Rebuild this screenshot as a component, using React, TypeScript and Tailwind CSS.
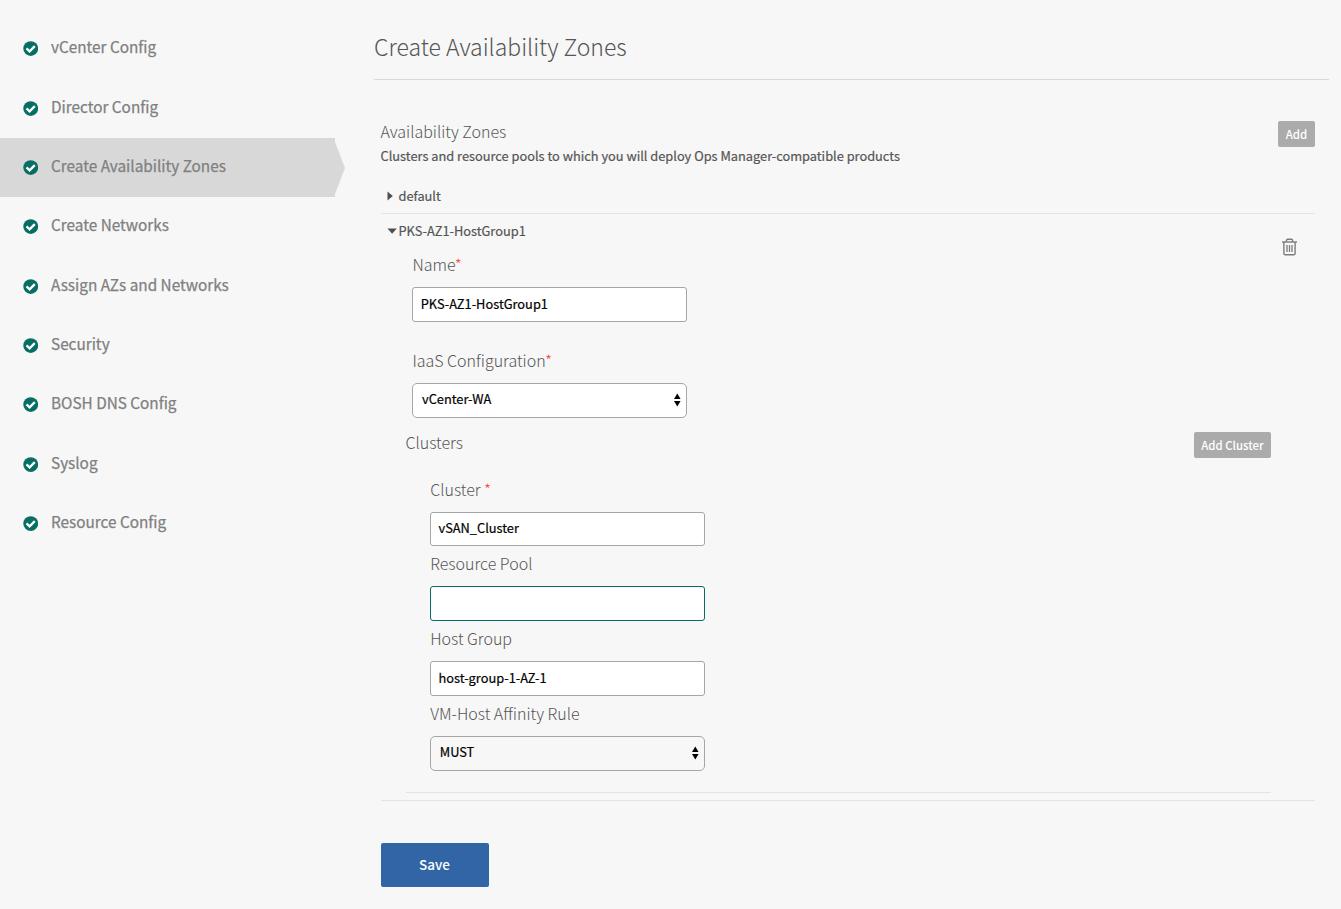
import type { ReactNode } from "react";

const STEPS = [
  "vCenter Config",
  "Director Config",
  "Create Availability Zones",
  "Create Networks",
  "Assign AZs and Networks",
  "Security",
  "BOSH DNS Config",
  "Syslog",
  "Resource Config",
];
const ACTIVE_STEP = 2;

function CheckIcon() {
  return (
    <svg width="15" height="15" viewBox="0 0 15 15" className="mb-[0.6px] shrink-0">
      <circle cx="7.7" cy="7.6" r="7.4" fill="#066e63" />
      <path d="M3.5 7.4 L6.6 10.3 L11.8 5.1" fill="none" stroke="#fff" strokeWidth="2.3" />
    </svg>
  );
}

function TrashIcon() {
  return (
    <svg width="16" height="18" viewBox="-0.5 0 16 18" fill="none" stroke="#7c7c7c">
      <path d="M0.5 4 H15.5" strokeWidth="1.4" />
      <path d="M4.9 3.7 V2.6 Q4.9 1.3 6.2 1.3 H9.8 Q11.1 1.3 11.1 2.6 V3.7" strokeWidth="1.4" />
      <path d="M2.4 4 V15.4 Q2.4 16.7 3.7 16.7 H12.3 Q13.6 16.7 13.6 15.4 V4" strokeWidth="1.4" />
      <path d="M5.5 7 V14 M8 7 V14 M10.5 7 V14" strokeWidth="1.3" />
    </svg>
  );
}

function SelectArrows() {
  return (
    <svg width="8" height="14" viewBox="0 0 8 14" fill="#000" className="mb-[2px]">
      <path d="M4.3 0.4 L7.6 6 H1 Z M4.3 13.6 L7.6 8 H1 Z" />
    </svg>
  );
}

function Label({ children, required }: { children: ReactNode; required?: boolean }) {
  return (
    <div className="mb-1.5 h-[34px] text-[16px] leading-[34px] font-light whitespace-pre text-[#555]">
      {children}
      {required && <span className="text-[#ff4438]">*</span>}
    </div>
  );
}

function TextField({ value, className = "h-[35px] border-[#a6a6a6]" }: { value: string; className?: string }) {
  return (
    <div className={`flex w-[275px] items-center rounded-[3px] border bg-white px-[7.3px] pb-[2px] text-[12.8px] leading-5 text-black [-webkit-text-stroke:0.2px] ${className}`}>
      {value}
    </div>
  );
}

function SelectField({ value, className = "bg-white" }: { value: string; className?: string }) {
  return (
    <div className={`flex h-[35px] w-[275px] items-center justify-between rounded-[5px] border border-[#a6a6a6] pr-[5px] pl-[8.6px] text-[12.8px] leading-5 text-black [-webkit-text-stroke:0.2px] ${className}`}>
      <span className="pb-[4px]">{value}</span>
      <SelectArrows />
    </div>
  );
}

function SmallButton({ children, className }: { children: ReactNode; className: string }) {
  return (
    <button className={`h-[26px] rounded-[2px] bg-[#ababab] text-center text-[11.4px] leading-[26px] font-medium text-white ${className}`}>
      {children}
    </button>
  );
}

function Sidebar() {
  return (
    <nav className="w-[374px] shrink-0 pt-[19.4px]">
      {STEPS.map((step, i) => (
        <div key={step} className="flex h-[59.35px]">
          <div className={`flex w-[335px] items-center pl-[23px] ${i === ACTIVE_STEP ? "bg-[#d8d8d8]" : ""}`}>
            <CheckIcon />
            <span className="ml-[13px] pb-[5.6px] text-[15.32px] leading-6 text-[#808080] [-webkit-text-stroke:0.25px]">{step}</span>
          </div>
          {i === ACTIVE_STEP && (
            <svg width="10" height="59" viewBox="0 0 10 59">
              <path d="M0 4 L10 30 L0 56 Z" fill="#d8d8d8" />
            </svg>
          )}
        </div>
      ))}
    </nav>
  );
}

export default function App() {
  return (
    <div className="flex h-[909px] w-[1341px] overflow-hidden bg-[#f7f7f7] font-['Noto_Sans_CJK_SC',sans-serif] text-[#555]">
      <Sidebar />
      <main className="w-[955px]">
        <h1 className="h-20 border-b border-[#d9d9d9] pt-[31px] text-[23px] leading-[30px] font-light">
          Create Availability Zones
        </h1>
        <div className="mr-[14px] ml-[7px] pt-[39px]">
          <div className="flex h-[59px] items-start justify-between">
            <div className="-ml-[0.5px]">
              <h2 className="h-6 text-[16px] leading-6 font-light">Availability Zones</h2>
              <p className="text-[12.8px] leading-[25px] [-webkit-text-stroke:0.2px]">
                Clusters and resource pools to which you will deploy Ops Manager-compatible products
              </p>
            </div>
            <div className="flex pt-[2px]">
              <SmallButton className="w-[37px]">Add</SmallButton>
            </div>
          </div>

          <div className="flex h-9 items-center border-b border-[#e3e3e3] pl-[6px] text-[12.8px] leading-[35px] [-webkit-text-stroke:0.2px]">
            <svg width="11.5" height="10" viewBox="0 0 11.5 10" className="shrink-0">
              <path d="M0.5 0.5 L5.8 5 L0.5 9.5 Z" fill="#4f4f4f" />
            </svg>
            default
          </div>

          <div className="flex h-[587px] justify-between border-b border-[#e3e3e3]">
            <div className="w-[890px]">
              <div className="flex h-[33px] items-center pl-[6px] text-[12.8px] leading-[33px] [-webkit-text-stroke:0.2px]">
                <svg width="11.5" height="6" viewBox="0 0 11.5 6" className="shrink-0">
                  <path d="M0.5 0.5 H9.8 L5.1 5.7 Z" fill="#4f4f4f" />
                </svg>
                PKS-AZ1-HostGroup1
              </div>

              <div className="pl-[31.4px]">
                <Label required>Name</Label>
                <TextField value="PKS-AZ1-HostGroup1" />
                <div className="h-[21px]" />
                <Label required>IaaS Configuration</Label>
                <SelectField value="vCenter-WA" />
              </div>

              <section className="ml-[25px] h-[375px] border-b border-[#e3e3e3]">
                <div className="flex h-[54px] items-start justify-between">
                  <h3 className="-ml-[0.5px] pt-[7px] text-[16px] leading-[34px] font-light">Clusters</h3>
                  <div className="flex pt-[14px]">
                    <SmallButton className="w-[77px]">Add Cluster</SmallButton>
                  </div>
                </div>
                <div className="pl-[24.2px]">
                  <Label required>{"Cluster "}</Label>
                  <TextField value="vSAN_Cluster" className="h-[34px] border-[#a6a6a6]" />
                  <Label>Resource Pool</Label>
                  <TextField value="" className="h-[35px] border-[#066e63]" />
                  <Label>Host Group</Label>
                  <TextField value="host-group-1-AZ-1" />
                  <Label>VM-Host Affinity Rule</Label>
                  <SelectField value="MUST" className="bg-[#f7f7f7]" />
                </div>
              </section>
            </div>
            <div className="pt-[24.4px] pr-[17.6px]">
              <TrashIcon />
            </div>
          </div>

          <button className="mt-[42px] block h-11 w-[108px] rounded-[2px] bg-[#3165a6] pr-px pb-[2px] text-[13.5px] leading-[42px] font-medium text-white">
            Save
          </button>
        </div>
      </main>
    </div>
  );
}
